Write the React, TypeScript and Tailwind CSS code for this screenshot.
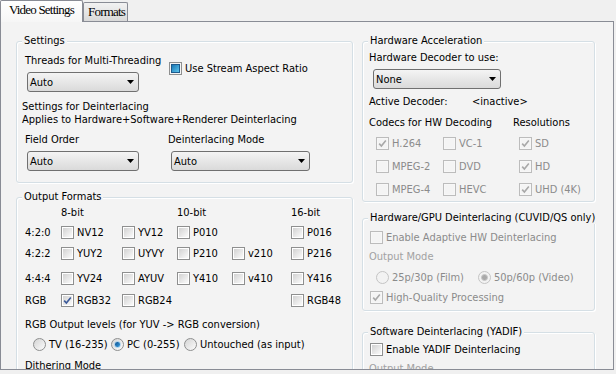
import React from 'react';

interface CheckProps {
  checked?: boolean;
  disabled?: boolean;
  mixed?: boolean;
}

function Check({ checked, disabled, mixed }: CheckProps) {
  if (mixed) {
    return (
      <div className="w-[13px] h-[13px] shrink-0 border border-[#8e8f8f] bg-[#f4f4f4] p-[1px]">
        <div className="w-full h-full border border-[#1d5a8c] bg-linear-to-br from-[#1778b4] to-[#5cc4ec]" />
      </div>
    );
  }
  return (
    <div
      className={`w-[13px] h-[13px] shrink-0 border p-[1px] ${
        disabled ? 'border-[#bcbcbc] bg-[#f7f7f7]' : 'border-[#8e8f8f] bg-white'
      }`}
    >
      <div
        className={`relative w-full h-full ${
          disabled ? 'bg-[#f4f4f4]' : 'bg-linear-to-br from-[#d2d2d2] to-[#fbfbfb]'
        }`}
      >
        {checked && (
          <svg className="absolute -left-[1px] -top-[1px]" width="11" height="11" viewBox="0 0 11 11">
            <path
              d="M2.2 5.6 L4.4 8 L8.8 2.6"
              fill="none"
              stroke={disabled ? '#a8a8a8' : '#3c5a9a'}
              strokeWidth="1.6"
            />
          </svg>
        )}
      </div>
    </div>
  );
}

function Radio({ checked, disabled }: { checked?: boolean; disabled?: boolean }) {
  return (
    <div
      className={`w-[13px] h-[13px] shrink-0 rounded-full border flex items-center justify-center ${
        disabled
          ? 'border-[#c4c4c4] bg-[#f2f2f2]'
          : 'border-[#8e8f8f] bg-linear-to-br from-[#d4d4d4] to-[#fcfcfc]'
      }`}
    >
      {checked && (
        <div
          className={`w-[7px] h-[7px] rounded-full border ${
            disabled
              ? 'border-[#c8c8c8] bg-[#a9a9a9]'
              : 'border-[#a9d1ee] bg-linear-to-br from-[#0f4f8e] to-[#3aa0e0]'
          }`}
        />
      )}
    </div>
  );
}

function CheckItem({
  label,
  checked,
  disabled,
  mixed,
  className = '',
}: CheckProps & { label: string; className?: string }) {
  return (
    <div className={`flex items-center h-[13px] ${className}`}>
      <Check checked={checked} disabled={disabled} mixed={mixed} />
      <span className={`ml-[3px] whitespace-nowrap ${disabled ? 'text-[#8b8b8b]' : ''}`}>{label}</span>
    </div>
  );
}

function RadioItem({
  label,
  checked,
  disabled,
  className = '',
}: {
  label: string;
  checked?: boolean;
  disabled?: boolean;
  className?: string;
}) {
  return (
    <div className={`flex items-center h-[13px] ${className}`}>
      <Radio checked={checked} disabled={disabled} />
      <span className={`ml-[3px] whitespace-nowrap ${disabled ? 'text-[#8b8b8b]' : ''}`}>{label}</span>
    </div>
  );
}

function Combo({ value, className = '' }: { value: string; className?: string }) {
  return (
    <div
      className={`h-[20px] rounded-[3px] border border-[#707070] bg-linear-to-b from-[#f4f4f4] to-[#dadada] flex items-center justify-between pl-[2px] pr-[4px] ${className}`}
    >
      <span>{value}</span>
      <svg width="7" height="4" viewBox="0 0 7 4">
        <polygon points="0,0 7,0 3.5,4" fill="#000" />
      </svg>
    </div>
  );
}

function GroupBox({
  title,
  className = '',
  titleClass = '',
  children,
}: {
  title: string;
  className?: string;
  titleClass?: string;
  children: React.ReactNode;
}) {
  return (
    <div
      className={`border border-[#d5dfe5] rounded-[3px] shadow-[inset_1px_1px_0_#ffffff,1px_1px_0_#ffffff] ${className}`}
    >
      <div className={`-mt-[8px] px-[2px] w-fit bg-[#f3f3f3] whitespace-nowrap ${titleClass}`}>{title}</div>
      {children}
    </div>
  );
}

const formatRows = [
  { label: '4:2:0', items: ['NV12', 'YV12', 'P010', '', 'P016'] },
  { label: '4:2:2', items: ['YUY2', 'UYVY', 'P210', 'v210', 'P216'] },
  { label: '4:4:4', items: ['YV24', 'AYUV', 'Y410', 'v410', 'Y416'] },
  { label: 'RGB', items: ['RGB32', 'RGB24', '', '', 'RGB48'] },
];

const cellWidths = ['w-[61px]', 'w-[55px]', 'w-[55px]', 'w-[59px]', 'w-[50px]'];
const rowGaps = ['mt-[7px]', 'mt-[8px]', 'mt-[12px]', 'mt-[9px]'];

export default function App() {
  return (
    <div className="w-[616px] h-[374px] bg-[#f0f0f0] overflow-hidden text-[11px] leading-[13px] text-black font-['DejaVu_Sans_Condensed','DejaVu_Sans',sans-serif]">
      {/* Tabs */}
      <div className="relative z-10 flex items-end h-[22px] -mb-[1px] font-['Liberation_Serif',serif] text-[13px] leading-[15px] tracking-[-0.8px] text-black">
        <div className="h-[22px] w-[83px] border border-b-0 border-[#898c95] rounded-t-[2px] bg-linear-to-b from-white to-[#f6f6f6] pl-[8px] pt-[1px]">
          Video Settings
        </div>
        <div className="h-[19px] w-[45px] mb-[1px] border border-b-0 border-[#898c95] rounded-t-[2px] bg-linear-to-b from-[#f2f2f2] to-[#d9d9d9] pl-[4px] pt-[1px]">
          Formats
        </div>
      </div>

      {/* Tab page */}
      <div className="h-[349px] mr-[2px] border border-[#898c95] bg-[#f3f3f3] overflow-hidden flex gap-[9px] pl-[15px] pt-[19px]">
        {/* Left column */}
        <div className="w-[337px] shrink-0">
          <GroupBox title="Settings" className="pl-[8px] pb-[11px]" titleClass="-ml-[3px]">
            <div className="flex mt-[7px]">
              <div className="w-[144px] shrink-0">
                <div className="whitespace-nowrap">Threads for Multi-Threading</div>
                <Combo value="Auto" className="mt-[5px] ml-[2px] w-[112px]" />
              </div>
              <CheckItem label="Use Stream Aspect Ratio" mixed className="mt-[8px]" />
            </div>
            <div className="-ml-[3px] mt-[8px]">Settings for Deinterlacing</div>
            <div className="-ml-[3px] whitespace-nowrap">Applies to Hardware+Software+Renderer Deinterlacing</div>
            <div className="flex mt-[7px]">
              <div className="w-[143px] shrink-0">
                <div>Field Order</div>
                <Combo value="Auto" className="mt-[5px] ml-[2px] w-[112px]" />
              </div>
              <div>
                <div>Deinterlacing Mode</div>
                <Combo value="Auto" className="mt-[5px] ml-[3px] w-[139px]" />
              </div>
            </div>
          </GroupBox>

          <GroupBox title="Output Formats" className="mt-[14px] pl-[8px] pb-[20px]" titleClass="-ml-[3px]">
            <div className="flex mt-[3px]">
              <div className="w-[36px]" />
              <div className="w-[116px]">8-bit</div>
              <div className="w-[114px]">10-bit</div>
              <div>16-bit</div>
            </div>
            {formatRows.map((row, r) => (
              <div key={row.label} className={`flex items-center h-[13px] ${rowGaps[r]}`}>
                <div className="w-[36px] shrink-0">{row.label}</div>
                {row.items.map((item, i) => (
                  <div key={i} className={`${cellWidths[i]} shrink-0`}>
                    {item && <CheckItem label={item} checked={item === 'RGB32'} />}
                  </div>
                ))}
              </div>
            ))}
            <div className="mt-[11px] whitespace-nowrap">RGB Output levels (for YUV -&gt; RGB conversion)</div>
            <div className="flex mt-[7px] ml-[8px]">
              <RadioItem label="TV (16-235)" className="w-[78px]" />
              <RadioItem label="PC (0-255)" checked className="w-[73px]" />
              <RadioItem label="Untouched (as input)" />
            </div>
            <div className="mt-[8px]">Dithering Mode</div>
          </GroupBox>
        </div>

        {/* Right column */}
        <div className="w-[233px] shrink-0">
          <GroupBox title="Hardware Acceleration" className="pl-[6px] pb-[5px]" titleClass="-ml-[1px]">
            <div className="mt-[4px]">Hardware Decoder to use:</div>
            <Combo value="None" className="mt-[5px] ml-[4px] w-[128px]" />
            <div className="flex mt-[6px]">
              <div className="w-[103px]">Active Decoder:</div>
              <div>&lt;inactive&gt;</div>
            </div>
            <div className="flex mt-[8px]">
              <div className="w-[144px]">Codecs for HW Decoding</div>
              <div>Resolutions</div>
            </div>
            {[
              ['H.264', 'VC-1', 'SD'],
              ['MPEG-2', 'DVD', 'HD'],
              ['MPEG-4', 'HEVC', 'UHD (4K)'],
            ].map((row, r) => (
              <div key={r} className={`flex ml-[7px] ${r === 0 ? 'mt-[8px]' : 'mt-[10px]'}`}>
                <CheckItem label={row[0]} disabled checked={r === 0} className="w-[67px]" />
                <CheckItem label={row[1]} disabled className="w-[76px]" />
                <CheckItem label={row[2]} disabled checked />
              </div>
            ))}
          </GroupBox>

          <GroupBox
            title="Hardware/GPU Deinterlacing (CUVID/QS only)"
            className="mt-[16px] pl-[6px] pb-[6px]"
            titleClass="-ml-[1px]"
          >
            <CheckItem label="Enable Adaptive HW Deinterlacing" disabled className="mt-[7px] ml-[1px]" />
            <div className="mt-[6px] text-[#a2a2a2]">Output Mode</div>
            <div className="flex mt-[8px] ml-[7px]">
              <RadioItem label="25p/30p (Film)" disabled className="w-[102px]" />
              <RadioItem label="50p/60p (Video)" disabled checked />
            </div>
            <CheckItem label="High-Quality Processing" disabled checked className="mt-[7px] ml-[1px]" />
          </GroupBox>

          <GroupBox
            title="Software Deinterlacing (YADIF)"
            className="mt-[21px] pl-[6px] pb-[20px]"
            titleClass="-ml-[1px]"
          >
            <CheckItem label="Enable YADIF Deinterlacing" className="mt-[5px] ml-[1px]" />
            <div className="mt-[6px] text-[#a2a2a2]">Output Mode</div>
          </GroupBox>
        </div>
      </div>
    </div>
  );
}
